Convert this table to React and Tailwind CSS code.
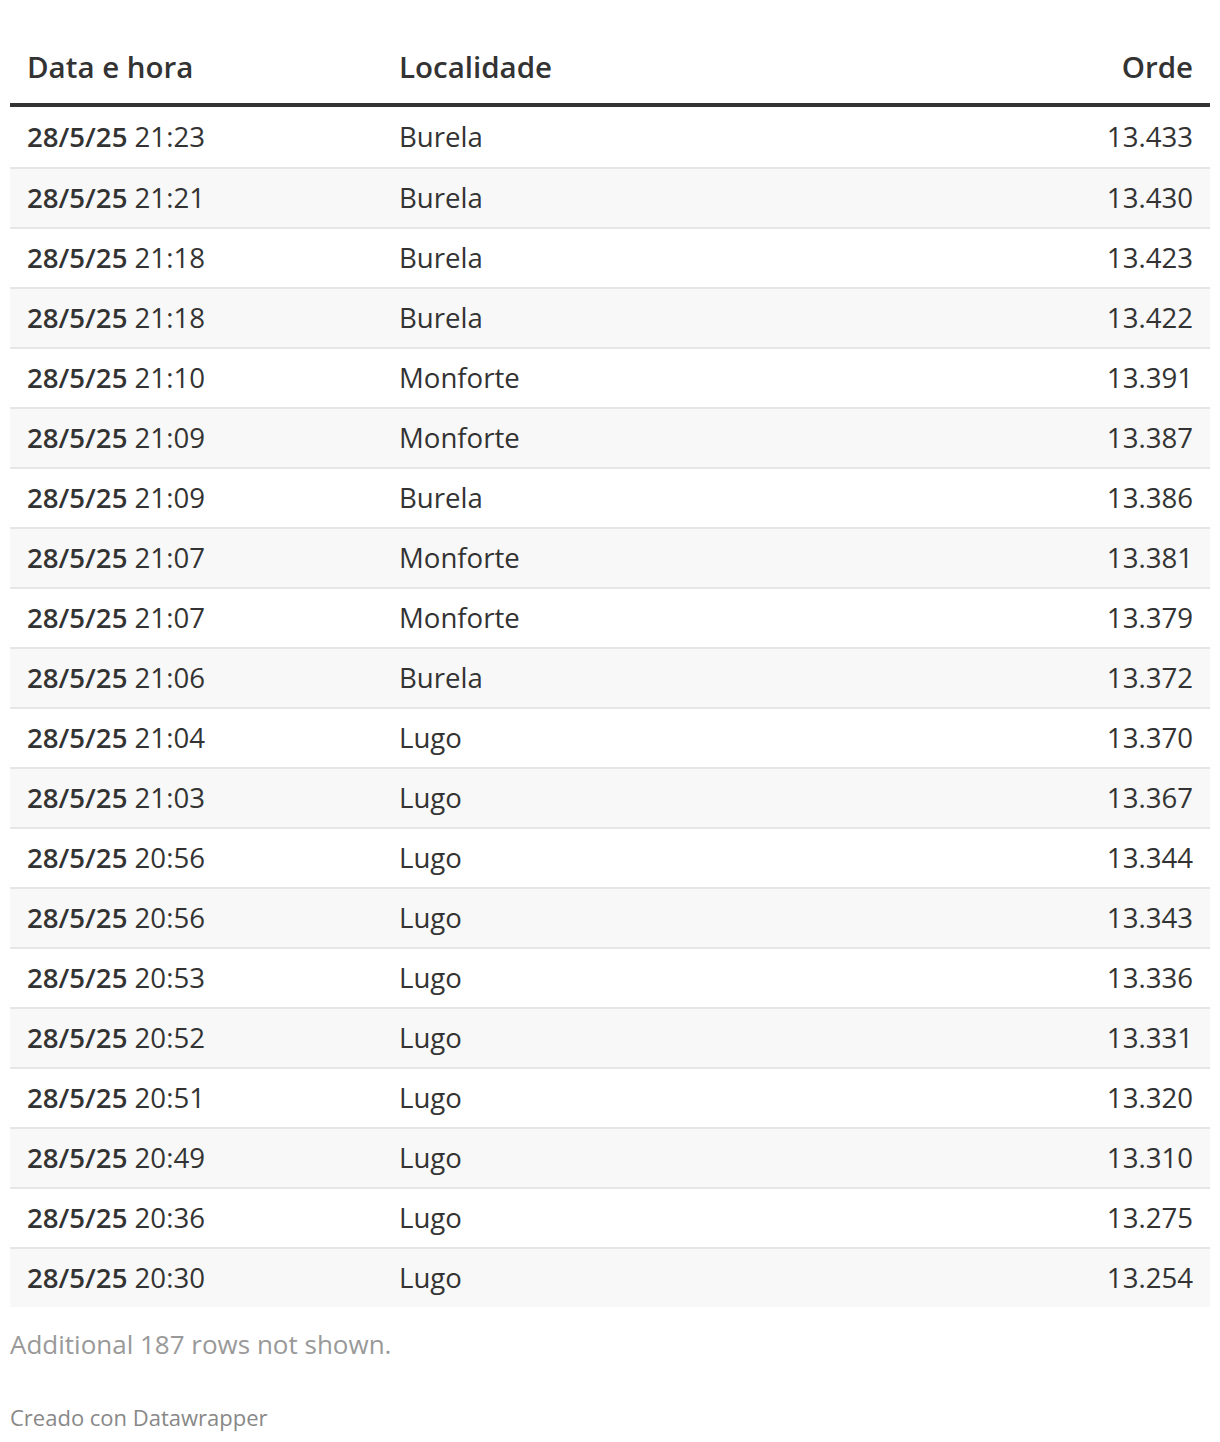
import React from 'react';

const rows = [
  ['21:23', 'Burela', '13.433'],
  ['21:21', 'Burela', '13.430'],
  ['21:18', 'Burela', '13.423'],
  ['21:18', 'Burela', '13.422'],
  ['21:10', 'Monforte', '13.391'],
  ['21:09', 'Monforte', '13.387'],
  ['21:09', 'Burela', '13.386'],
  ['21:07', 'Monforte', '13.381'],
  ['21:07', 'Monforte', '13.379'],
  ['21:06', 'Burela', '13.372'],
  ['21:04', 'Lugo', '13.370'],
  ['21:03', 'Lugo', '13.367'],
  ['20:56', 'Lugo', '13.344'],
  ['20:56', 'Lugo', '13.343'],
  ['20:53', 'Lugo', '13.336'],
  ['20:52', 'Lugo', '13.331'],
  ['20:51', 'Lugo', '13.320'],
  ['20:49', 'Lugo', '13.310'],
  ['20:36', 'Lugo', '13.275'],
  ['20:30', 'Lugo', '13.254'],
];

export default function App() {
  return (
    <div className="bg-white min-h-[1442px] px-[10px] text-[#333] font-['Open_Sans',sans-serif]">
      <div className="flex items-end h-[103px] pb-[22px] text-[29.5px] font-semibold leading-none">
        <div className="w-[389px] pl-[17px]">Data e hora</div>
        <div className="flex-1">Localidade</div>
        <div className="pr-[17px] text-right">Orde</div>
      </div>
      <div className="border-t-4 border-[#333]">
        {rows.map((r, i) => (
          <div
            key={i}
            className={`flex items-center h-[60px] text-[27.6px] ${i > 0 ? 'border-t-2 border-[#e6e6e6]' : 'h-[58px]'} ${i % 2 === 1 ? 'bg-[#f8f8f8]' : 'bg-white'}`}
          >
            <div className="w-[389px] pl-[17px]">
              <span className="font-semibold">28/5/25</span> {r[0]}
            </div>
            <div className="flex-1">{r[1]}</div>
            <div className="pr-[17px] text-right">{r[2]}</div>
          </div>
        ))}
      </div>
      <div className="mt-[18px] text-[26px] text-[#999]">Additional 187 rows not shown.</div>
      <div className="mt-[37px] text-[22px] text-[#888]">Creado con Datawrapper</div>
    </div>
  );
}
